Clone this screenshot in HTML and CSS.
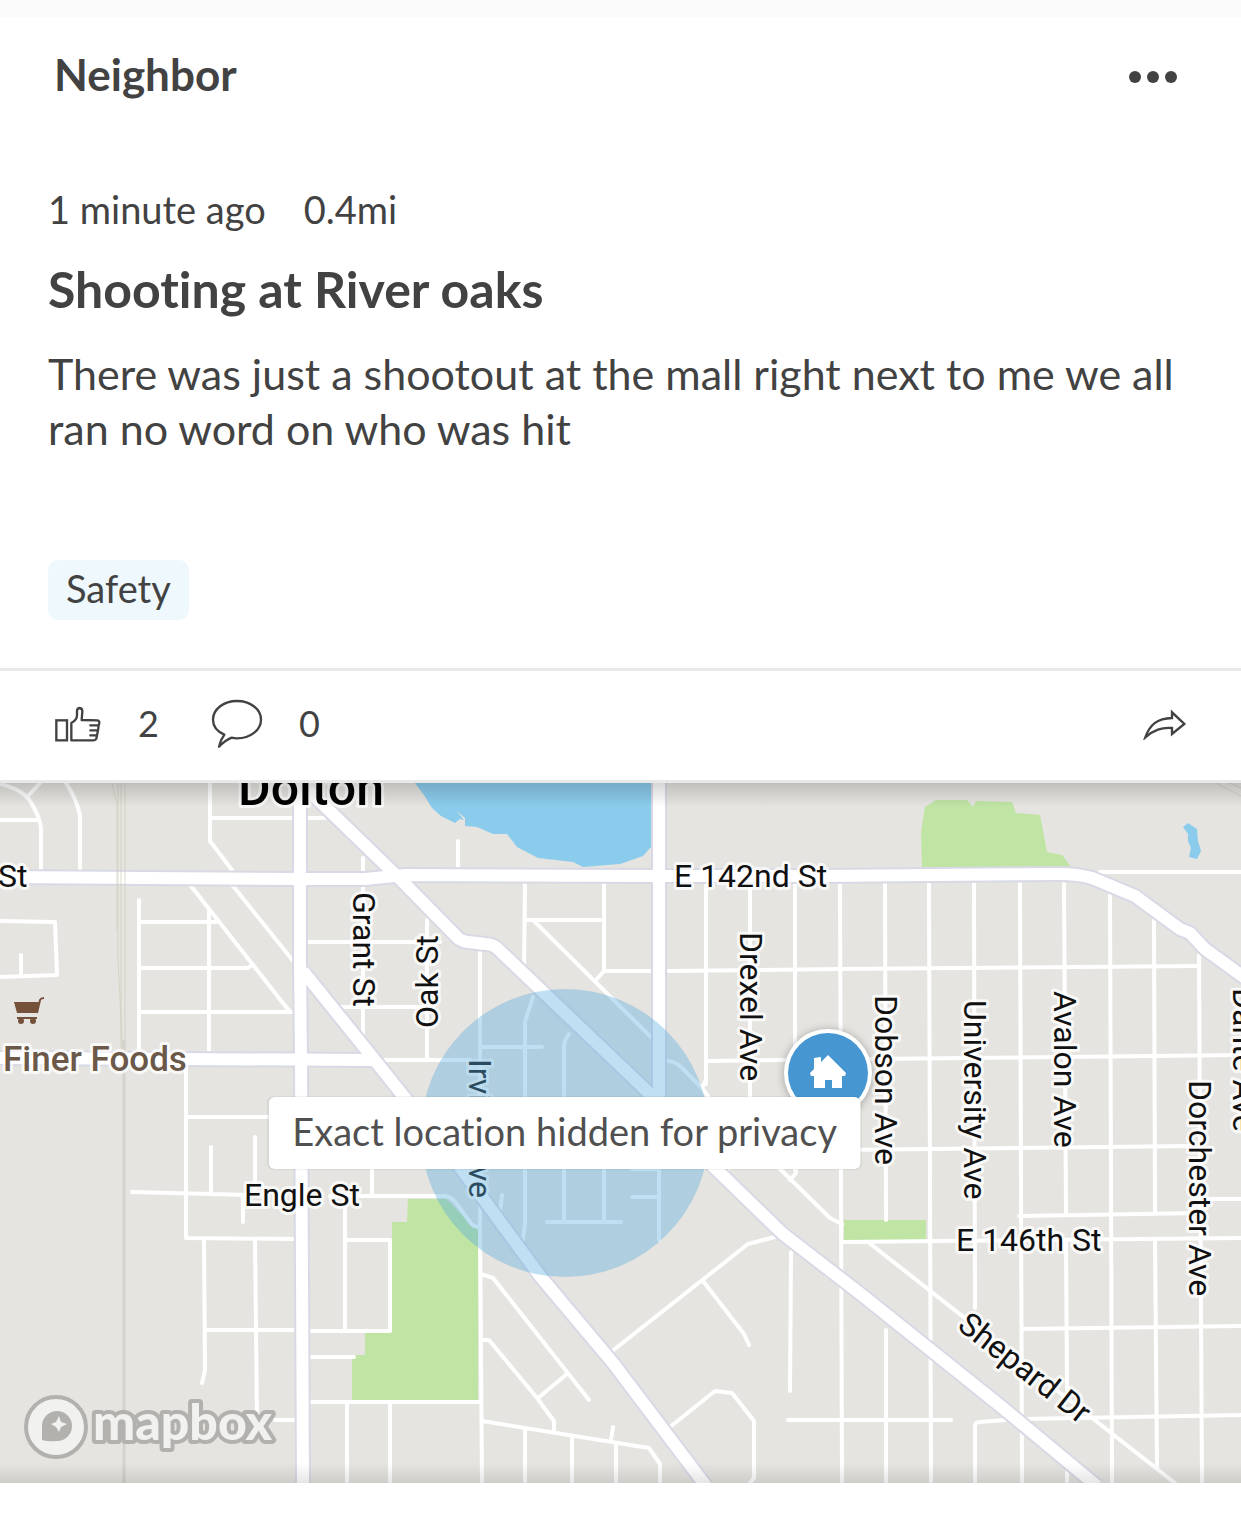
FILE: index.html
```html
<!DOCTYPE html>
<html lang="en">
<head>
    <meta charset="UTF-8">
    <meta name="viewport" content="width=device-width, initial-scale=1.0">
    <title>Neighbor post</title>
    <link rel="stylesheet" href="styles.css">
</head>
<body>
    <article class="post">
        <header class="post-header">
            <h2>Neighbor</h2>
            <button class="icon-button" aria-label="More options">
                <svg width="48" height="12" viewBox="0 0 48 12" fill="currentColor">
                    <circle cx="6" cy="6" r="6"/>
                    <circle cx="24" cy="6" r="6"/>
                    <circle cx="42" cy="6" r="6"/>
                </svg>
            </button>
        </header>
        <div class="post-body">
            <div class="meta">
                <span>1 minute ago</span>
                <span>0.4mi</span>
            </div>
            <h1>Shooting at River oaks</h1>
            <p>There was just a shootout at the mall right next to me we all ran no word on who was hit</p>
            <a class="tag" href="#">Safety</a>
        </div>
        <div class="actions">
            <button class="icon-button" aria-label="Like">
                <svg width="48" height="37" viewBox="0 0 144 111" fill="none" stroke="currentColor" stroke-width="7">
                    <rect x="7" y="43" width="32" height="60"/>
                    <path stroke-linejoin="round" stroke-linecap="round" d="M52 103V51C64 45 69 39 69 28V14Q70 6 77 6Q85 7 85 16L83 42L130 43Q137 45 136 51L134 58H109M134 58L132 73H109M132 73L129 88H109M129 88L127 98Q125 103 119 103H52"/>
                </svg>
            </button>
            <span class="count">2</span>
            <button class="icon-button" aria-label="Comment">
                <svg width="52" height="50" viewBox="0 0 156 150" fill="none" stroke="currentColor" stroke-width="7">
                    <path stroke-linejoin="round" d="M40 107C18 97 6 81 6 62C6 31 37 6 78 6S150 31 150 62S118 118 78 118Q70 118 62 116Q44 123 24 143Q28 124 40 107Z"/>
                </svg>
            </button>
            <span class="count">0</span>
            <button class="icon-button share" aria-label="Share">
                <svg width="44" height="31" viewBox="0 0 132 93" fill="none" stroke="currentColor" stroke-width="7">
                    <path d="M7 85C20 48 42 28 87 27V10L124 45L87 75V57C55 55 33 62 7 85Z"/>
                </svg>
            </button>
        </div>
        <div class="map">
            <svg class="map-canvas" viewBox="0 783 1241 700">
                <rect class="land" y="783" width="1241" height="700"/>

                <!-- water and parks -->
                <path class="water" d="M415 783L424 795L432 808L441 816L455 823L460 819L464 820L457 811L465 818V826L477 827L493 834H507L517 847L538 858L573 862L583 867L620 864L643 856L651 847V783Z"/>
                <path class="water" d="M1183 827L1188 823L1197 829L1198 841L1201 851L1197 859L1189 857L1191 848L1188 841V834Z"/>
                <path class="park" d="M922 868L921 832L925 807L936 800H967L973 807L976 801L1012 802L1016 813L1040 815L1047 852L1062 855L1072 868Z"/>
                <path class="park" d="M844 1220H926V1240H844Z"/>
                <path class="park" d="M408 1199H446L478 1230V1400H352V1355H365V1332H392V1222H407Z"/>

                <!-- side streets, west -->
                <g class="street">
                    <path d="M0 784Q26 790 33 806Q41 820 41 830V870M28 796L40 783M0 820H39M66 783Q76 798 80 815V870"/>
                    <path d="M0 921L55 922L57 975L0 977M21 955V975"/>
                    <path d="M210 783V841L232 870M211 818H294M307 818H325M363 858V872"/>
                    <path d="M139 900V1050M139 922H216M139 968H248L252 965M139 1012H292M209 911V1050M191 886L290 1012M233 886L294 962"/>
                    <path d="M308 942H440M340 1007H430M363 883V1040M427 920V1060M382 1060H470M458 841V868"/>
                    <path d="M186 1066V1238L295 1239M186 1117H294M211 1147V1192M255 1137V1190M132 1192L250 1195M243 1195V1222M372 1165V1196M330 1196H445Q452 1197 456 1203L470 1222Q473 1227 479 1227"/>
                    <path d="M204 1240L205 1370L202 1383M255 1240L257 1420M206 1330H295M275 1420H296M345 1200V1330M347 1240H390V1331H310M310 1357H354M310 1402H480M347 1402V1483M390 1402V1483"/>
                    <path d="M480 952V1222L482 1483M482 1047H542M533 997L525 1022V1222L523 1240M569 1034Q564 1040 564 1048V1222M604 1165V1222M547 1222H621M502 1195L500 1213M632 1169H659M632 1197H659M659 1165V1240"/>
                </g>

                <!-- side streets, centre -->
                <g class="street">
                    <path d="M525 884L524 970M604 884V971L595 981M525 920H604M535 922L652 1038M604 971L660 971M667 1061Q675 1061 681 1067L702 1088L706 1080M702 1088L710 1099"/>
                    <path d="M481 1274L493 1278L589 1400M482 1340H489L537 1398L554 1421V1430M538 1398L567 1374M482 1421L649 1448L660 1464V1483M525 1430V1483M572 1436V1483M613 1427L611 1440M616 1444V1483"/>
                    <path d="M611 1352L748 1244L775 1237M703 1281L744 1334L749 1345M670 1427L715 1391L732 1393L754 1421V1478L750 1483M791 1252L790 1391"/>
                    <path d="M730 1166L725 1174M776 1165L830 1218L842 1224M796 1165V1173L790 1180"/>
                </g>

                <!-- side streets, east grid -->
                <g class="street">
                    <path d="M706 884V1084M750 884V1100M795 884V1170M840 884L842 1483M885 884L886 1220M886 1330V1483M929 884L931 1483M974 884L975 1308M975 1483V1426Q975 1422 980 1422L1005 1420M1020 884L1022 1483M1064 884L1066 1215M1066 1240L1067 1390M1067 1472V1483M1110 890L1112 1483M1154 920L1155 1213M1155 1240L1157 1468M1199 955L1202 1483"/>
                    <path d="M668 971L840 969L1199 966M706 1061L870 1059L1241 1055M842 1150L1190 1146M1019 1216L1200 1213M842 1242L1241 1238M1205 1199H1241M1022 1329L1241 1326M788 1420H951M1022 1419L1241 1415M1100 872H1241M868 1242L1175 1483"/>
                </g>

                <!-- main roads: casing first, then the white fill on top -->
                <g class="road-casing">
                    <path d="M0 877L300 879H365L405 875L660 876L820 876L1060 874Q1078 874 1092 878L1135 896L1180 929L1190 933L1205 949L1245 978"/>
                    <path d="M300 780V960L301 1060L303 1486"/>
                    <path d="M659 780V1108"/>
                    <path d="M0 1058L372 1060"/>
                    <path d="M308 790L403 882L456 936Q460 941 468 942L485 944Q493 944 498 949L650 1094L713 1166L783 1234L862 1295L1003 1408L1097 1486"/>
                    <path d="M303 971L373 1058L457 1163L540 1276L613 1363L706 1486"/>
                </g>
                <g class="road">
                    <path d="M0 877L300 879H365L405 875L660 876L820 876L1060 874Q1078 874 1092 878L1135 896L1180 929L1190 933L1205 949L1245 978"/>
                    <path d="M300 780V960L301 1060L303 1486"/>
                    <path d="M659 780V1108"/>
                    <path d="M0 1058L372 1060"/>
                    <path d="M308 790L403 882L456 936Q460 941 468 942L485 944Q493 944 498 949L650 1094L713 1166L783 1234L862 1295L1003 1408L1097 1486"/>
                    <path d="M303 971L373 1058L457 1163L540 1276L613 1363L706 1486"/>
                </g>

                <!-- railway -->
                <path class="rail" d="M118 783V960L123 1060M121 783V1050M125 783V1050M112 783L117 805V930M1210 780L1241 796M1222 780L1241 788"/>
                <path class="rail-wide" d="M124 1040V1483"/>

                <!-- labels -->
                <g class="label">
                    <text x="-2" y="887">St</text>
                    <text x="674" y="887">E 142nd St</text>
                    <text x="244" y="1206">Engle St</text>
                    <text x="956" y="1251">E 146th St</text>
                    <text transform="translate(353 892) rotate(90)">Grant St</text>
                    <text transform="translate(438 1028) rotate(-90)">Oak St</text>
                    <text transform="translate(469 1059) rotate(90)">Irving Ave</text>
                    <text transform="translate(740 932) rotate(90)">Drexel Ave</text>
                    <text transform="translate(875 995) rotate(90)">Dobson Ave</text>
                    <text transform="translate(964 1000) rotate(90)">University Ave</text>
                    <text transform="translate(1054 991) rotate(90)">Avalon Ave</text>
                    <text transform="translate(1189 1080) rotate(90)">Dorchester Ave</text>
                    <text transform="translate(1233 988) rotate(90)">Dante Ave</text>
                    <text transform="translate(956 1328) rotate(38)">Shepard Dr</text>
                </g>
                <text class="label town" x="238" y="805">Dolton</text>
                <g class="poi">
                    <path d="M14 1002H39L37 1013H17Z"/>
                    <path class="poi-line" d="M37 1013L40 1000Q41 998 44 998M17 1018H37"/>
                    <circle cx="21" cy="1021" r="3"/>
                    <circle cx="33" cy="1021" r="3"/>
                </g>
                <text class="label place" x="3" y="1071">Finer Foods</text>

                <circle class="area" cx="565" cy="1133" r="144"/>

                <!-- home pin -->
                <g class="pin">
                    <circle cx="828" cy="1073" r="44" fill="#fff"/>
                    <circle cx="828" cy="1073" r="40" fill="#4696d2"/>
                    <path fill="#fff" d="M828 1055L846 1073L845 1076H842V1088H832V1080H825V1088H814V1076H811L810 1073L814 1069V1058L821 1057V1062Z"/>
                </g>

                <!-- attribution logo -->
                <g class="logo">
                    <circle cx="56" cy="1427" r="30" fill="#f1f1ef" stroke="#b2b1ae" stroke-width="4"/>
                    <path fill="#b2b1ae" d="M42 1440V1427A15 15 0 1 1 57 1441Q49 1442 42 1440Z"/>
                    <path fill="#f1f1ef" d="M59 1416L61 1422L67 1424L61 1427L59 1432L56 1427L51 1424L56 1422Z"/>
                    <text x="93" y="1440">mapbox</text>
                </g>
            </svg>
            <div class="tooltip">Exact location hidden for privacy</div>
        </div>
    </article>
</body>
</html>
```
FILE: styles.css
```css
* {
    box-sizing: border-box;
}
body {
    margin: 0;
    font-family: 'Lato', 'Noto Sans', sans-serif;
    font-variant-ligatures: none;
    background: #fff;
    color: #424242;
}
h1, h2, p {
    margin: 0;
}
.post {
    border-top: 17px solid #fafafa;
}
.post-header {
    display: flex;
    justify-content: space-between;
    align-items: center;
    height: 120px;
    padding: 0 64px 0 54px;
}
.post-header h2 {
    padding-bottom: 6px;
    font-size: 44px;
    line-height: 56px;
}
.icon-button {
    display: flex;
    padding: 0;
    border: none;
    background: none;
    color: inherit;
    cursor: pointer;
}
.post-body {
    padding: 48px 48px 48px;
}
.meta {
    display: flex;
    gap: 38px;
    font-size: 38px;
    line-height: 48px;
}
.post-body h1 {
    margin-top: 28px;
    font-size: 50px;
    line-height: 56px;
}
.post-body p {
    margin-top: 29px;
    font-size: 43px;
    line-height: 55px;
}
.tag {
    display: inline-block;
    margin-top: 104px;
    padding: 0 18px 4px;
    border-radius: 10px;
    background: #eff8fc;
    color: inherit;
    font-size: 38px;
    line-height: 56px;
    text-decoration: none;
    vertical-align: top;
}
.actions {
    display: flex;
    align-items: center;
    height: 115px;
    padding: 0 54px 3px;
    border-top: 3px solid #e8e8e8;
    border-bottom: 3px solid #e8e8e8;
}
.count {
    width: 73px;
    margin-left: 36px;
    padding-bottom: 2px;
    font-size: 36px;
    line-height: 48px;
}
.share {
    margin-left: auto;
}

/* Map */
.map {
    position: relative;
    overflow: hidden;
}
.map::after {
    content: "";
    position: absolute;
    inset: 0;
    background:
        linear-gradient(rgba(0, 0, 0, 0.16), transparent 24px),
        linear-gradient(to top, rgba(0, 0, 0, 0.1), transparent 20px);
    pointer-events: none;
}
.map-canvas {
    display: block;
    width: 100%;
    height: auto;
}
.land {
    fill: #e5e4e0;
}
.water {
    fill: #8bcced;
}
.park {
    fill: #bfe4a4;
}
.street {
    fill: none;
    stroke: #fff;
    stroke-width: 4;
    stroke-linecap: round;
    stroke-linejoin: round;
}
.road-casing {
    fill: none;
    stroke: #d9d9e6;
    stroke-width: 16;
}
.road {
    fill: none;
    stroke: #fff;
    stroke-width: 12;
}
.rail {
    fill: none;
    stroke: #cfcdb9;
    stroke-opacity: 0.7;
}
.rail-wide {
    fill: none;
    stroke: #d3d2cc;
    stroke-width: 3;
}
.label {
    fill: #111;
    stroke: rgba(255, 255, 255, 0.75);
    stroke-width: 6;
    stroke-linejoin: round;
    paint-order: stroke;
    font-family: 'Roboto', sans-serif;
    font-size: 32px;
}
.town {
    fill: #000;
    font-size: 50px;
    font-weight: 500;
}
.place {
    fill: #6b5848;
    font-size: 35px;
    font-weight: 500;
}
.poi {
    fill: #75513c;
}
.poi-line {
    fill: none;
    stroke: #75513c;
    stroke-width: 2;
}
.area {
    fill: rgba(87, 170, 221, 0.38);
}
.pin {
    filter: drop-shadow(0 1px 4px rgba(0, 0, 0, 0.3));
}
.logo text {
    fill: #f1f1ef;
    stroke: #b2b1ae;
    stroke-width: 8;
    stroke-linejoin: round;
    paint-order: stroke;
    font-size: 50px;
    font-weight: 900;
}
.tooltip {
    position: absolute;
    top: 50%;
    left: 45.5%;
    transform: translate(-50%, -50%);
    padding: 0 24px 4px;
    border-radius: 6px;
    background: #fff;
    box-shadow: 0 0 2px rgba(0, 0, 0, 0.2);
    color: #505050;
    font-size: 38px;
    line-height: 68px;
    white-space: nowrap;
}
```
